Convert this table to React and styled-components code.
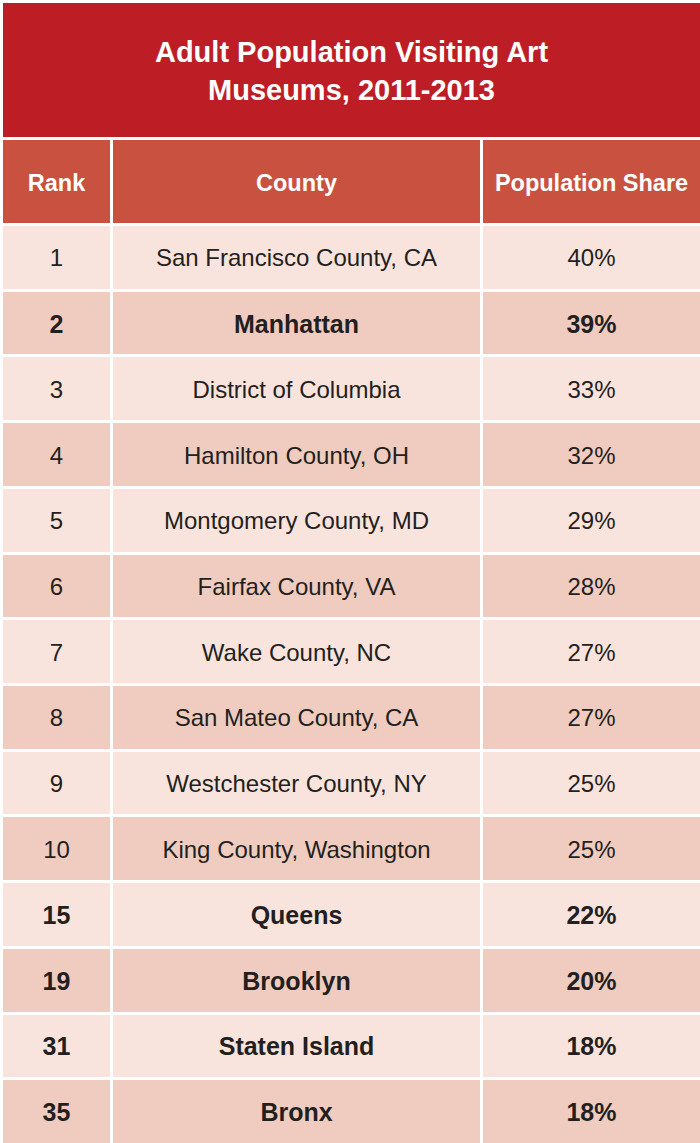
import React from 'react';
import styled, { createGlobalStyle } from 'styled-components';

const GlobalStyle = createGlobalStyle`
  html, body {
    margin: 0;
    padding: 0;
    background: #ffffff;
  }
  body {
    font-family: "Liberation Sans", Arial, sans-serif;
  }
`;

const Page = styled.div`
  display: flex;
  flex-direction: column;
  gap: 3px;
  height: 1143px;
  width: 700px;
  box-sizing: border-box;
  padding: 3px 0 0 3px;
  overflow: hidden;
`;

const TitleBand = styled.div`
  height: 134px;
  flex: none;
  background: #bd1e26;
  color: #ffffff;
  display: flex;
  align-items: center;
  justify-content: center;
  text-align: center;
  font-size: 29px;
  font-weight: 700;
  line-height: 38px;
  padding-top: 2px;
  box-sizing: border-box;
`;

const Row = styled.div`
  display: grid;
  grid-template-columns: 107px 367px 1fr;
  gap: 3px;
  flex: ${p => (p.$head ? 'none' : '1')};
  height: ${p => (p.$head ? '83px' : 'auto')};
`;

const Cell = styled.div`
  display: flex;
  align-items: center;
  justify-content: center;
  white-space: nowrap;
  font-size: ${p => (p.$head ? '23.5px' : p.$bold ? '25px' : '24px')};
  font-weight: ${p => (p.$bold || p.$head ? 700 : 400)};
  color: ${p => (p.$head ? '#ffffff' : '#231f20')};
  background: ${p =>
    p.$head ? '#c95140' : p.$alt ? '#efccbf' : '#f8e4dc'};
  padding-top: ${p => (p.$head ? '3px' : '2px')};
  box-sizing: border-box;
`;

const rows = [
  ['1', 'San Francisco County, CA', '40%', false],
  ['2', 'Manhattan', '39%', true],
  ['3', 'District of Columbia', '33%', false],
  ['4', 'Hamilton County, OH', '32%', false],
  ['5', 'Montgomery County, MD', '29%', false],
  ['6', 'Fairfax County, VA', '28%', false],
  ['7', 'Wake County, NC', '27%', false],
  ['8', 'San Mateo County, CA', '27%', false],
  ['9', 'Westchester County, NY', '25%', false],
  ['10', 'King County, Washington', '25%', false],
  ['15', 'Queens', '22%', true],
  ['19', 'Brooklyn', '20%', true],
  ['31', 'Staten Island', '18%', true],
  ['35', 'Bronx', '18%', true],
];

const App = () => {
  return (
    <>
      <GlobalStyle />
      <Page>
        <TitleBand>
          Adult Population Visiting Art
          <br />
          Museums, 2011-2013
        </TitleBand>
        <Row $head>
          <Cell $head>Rank</Cell>
          <Cell $head>County</Cell>
          <Cell $head>Population Share</Cell>
        </Row>
        {rows.map(([rank, county, share, bold], i) => (
          <Row key={rank}>
            <Cell $alt={i % 2 === 1} $bold={bold}>{rank}</Cell>
            <Cell $alt={i % 2 === 1} $bold={bold}>{county}</Cell>
            <Cell $alt={i % 2 === 1} $bold={bold}>{share}</Cell>
          </Row>
        ))}
      </Page>
    </>
  );
};

export default App;
